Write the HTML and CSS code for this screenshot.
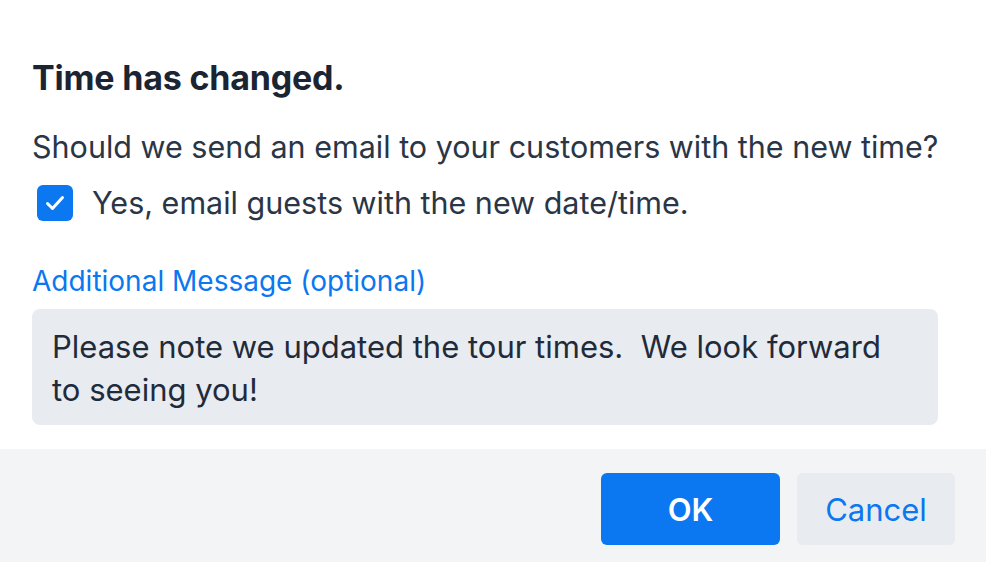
FILE: index.html
```html
<!DOCTYPE html>
<html>
<head>
<meta charset="utf-8">
<link rel="stylesheet" href="styles.css">
</head>
<body>
<div class="dialog">
  <div class="content">
    <h1 class="title">Time has changed.</h1>
    <p class="question">Should we send an email to your customers with the new time?</p>
    <label class="check-row">
      <span class="checkbox">
        <svg viewBox="0 0 20 16" width="20" height="16"><path d="M2.5 8.5l5 5L17.5 2.5" fill="none" stroke="#fff" stroke-width="3" stroke-linecap="round" stroke-linejoin="round"/></svg>
      </span>
      <span class="check-text">Yes, email guests with the new date/time.</span>
    </label>
    <div class="field-label">Additional Message (optional)</div>
    <div class="textarea">Please note we updated the tour times.&nbsp; We look forward to seeing you!</div>
  </div>
  <div class="footer">
    <button class="btn btn-primary">OK</button>
    <button class="btn btn-secondary">Cancel</button>
  </div>
</div>
</body>
</html>
```
FILE: styles.css
```css
* { box-sizing: border-box; }
html, body { margin: 0; padding: 0; background: #fff; }
body {
  font-family: Inter, "Liberation Sans", sans-serif;
  color: #1f2937;
  width: 986px;
  height: 562px;
  overflow: hidden;
}
.dialog { display: flex; flex-direction: column; height: 562px; }
.content {
  flex: 1;
  min-height: 0;
  padding: 56px 48px 0 32px;
}
.title {
  margin: 0;
  font-size: 34px;
  font-weight: 700;
  line-height: 44px;
  color: #1a2433;
  letter-spacing: -0.2px;
}
.question {
  margin: 27px 0 0;
  font-size: 30.5px;
  line-height: 40px;
  color: #2a3646;
  white-space: nowrap;
}
.check-row {
  display: flex;
  align-items: center;
  gap: 19px;
  margin-top: 16px;
  padding-left: 5px;
}
.checkbox {
  width: 36px;
  height: 36px;
  border-radius: 6px;
  background: #0b77f0;
  display: flex;
  align-items: center;
  justify-content: center;
}
.check-text {
  font-size: 30.5px;
  line-height: 40px;
  color: #2a3646;
}
.field-label {
  margin-top: 42px;
  font-size: 28px;
  line-height: 32px;
  color: #0b77f0;
}
.textarea {
  margin-top: 12px;
  background: #e8ebef;
  border-radius: 8px;
  padding: 16px 30px 16px 20px;
  font-size: 31px;
  line-height: 43px;
  color: #1f2b3b;
  height: 116px;
}
.footer {
  flex-shrink: 0;
  height: 113px;
  background: #f3f4f6;
  display: flex;
  justify-content: flex-end;
  align-items: flex-start;
  gap: 17px;
  padding: 24px 31px 0 0;
}
.btn {
  height: 72px;
  border: none;
  border-radius: 6px;
  font-family: Inter, "Liberation Sans", sans-serif;
  font-size: 31px;
  padding: 0;
}
.btn-primary { width: 179px; background: #0b77f0; color: #fff; font-weight: 600; }
.btn-secondary { width: 158px; background: #e8ebef; color: #0b77f0; }
```
